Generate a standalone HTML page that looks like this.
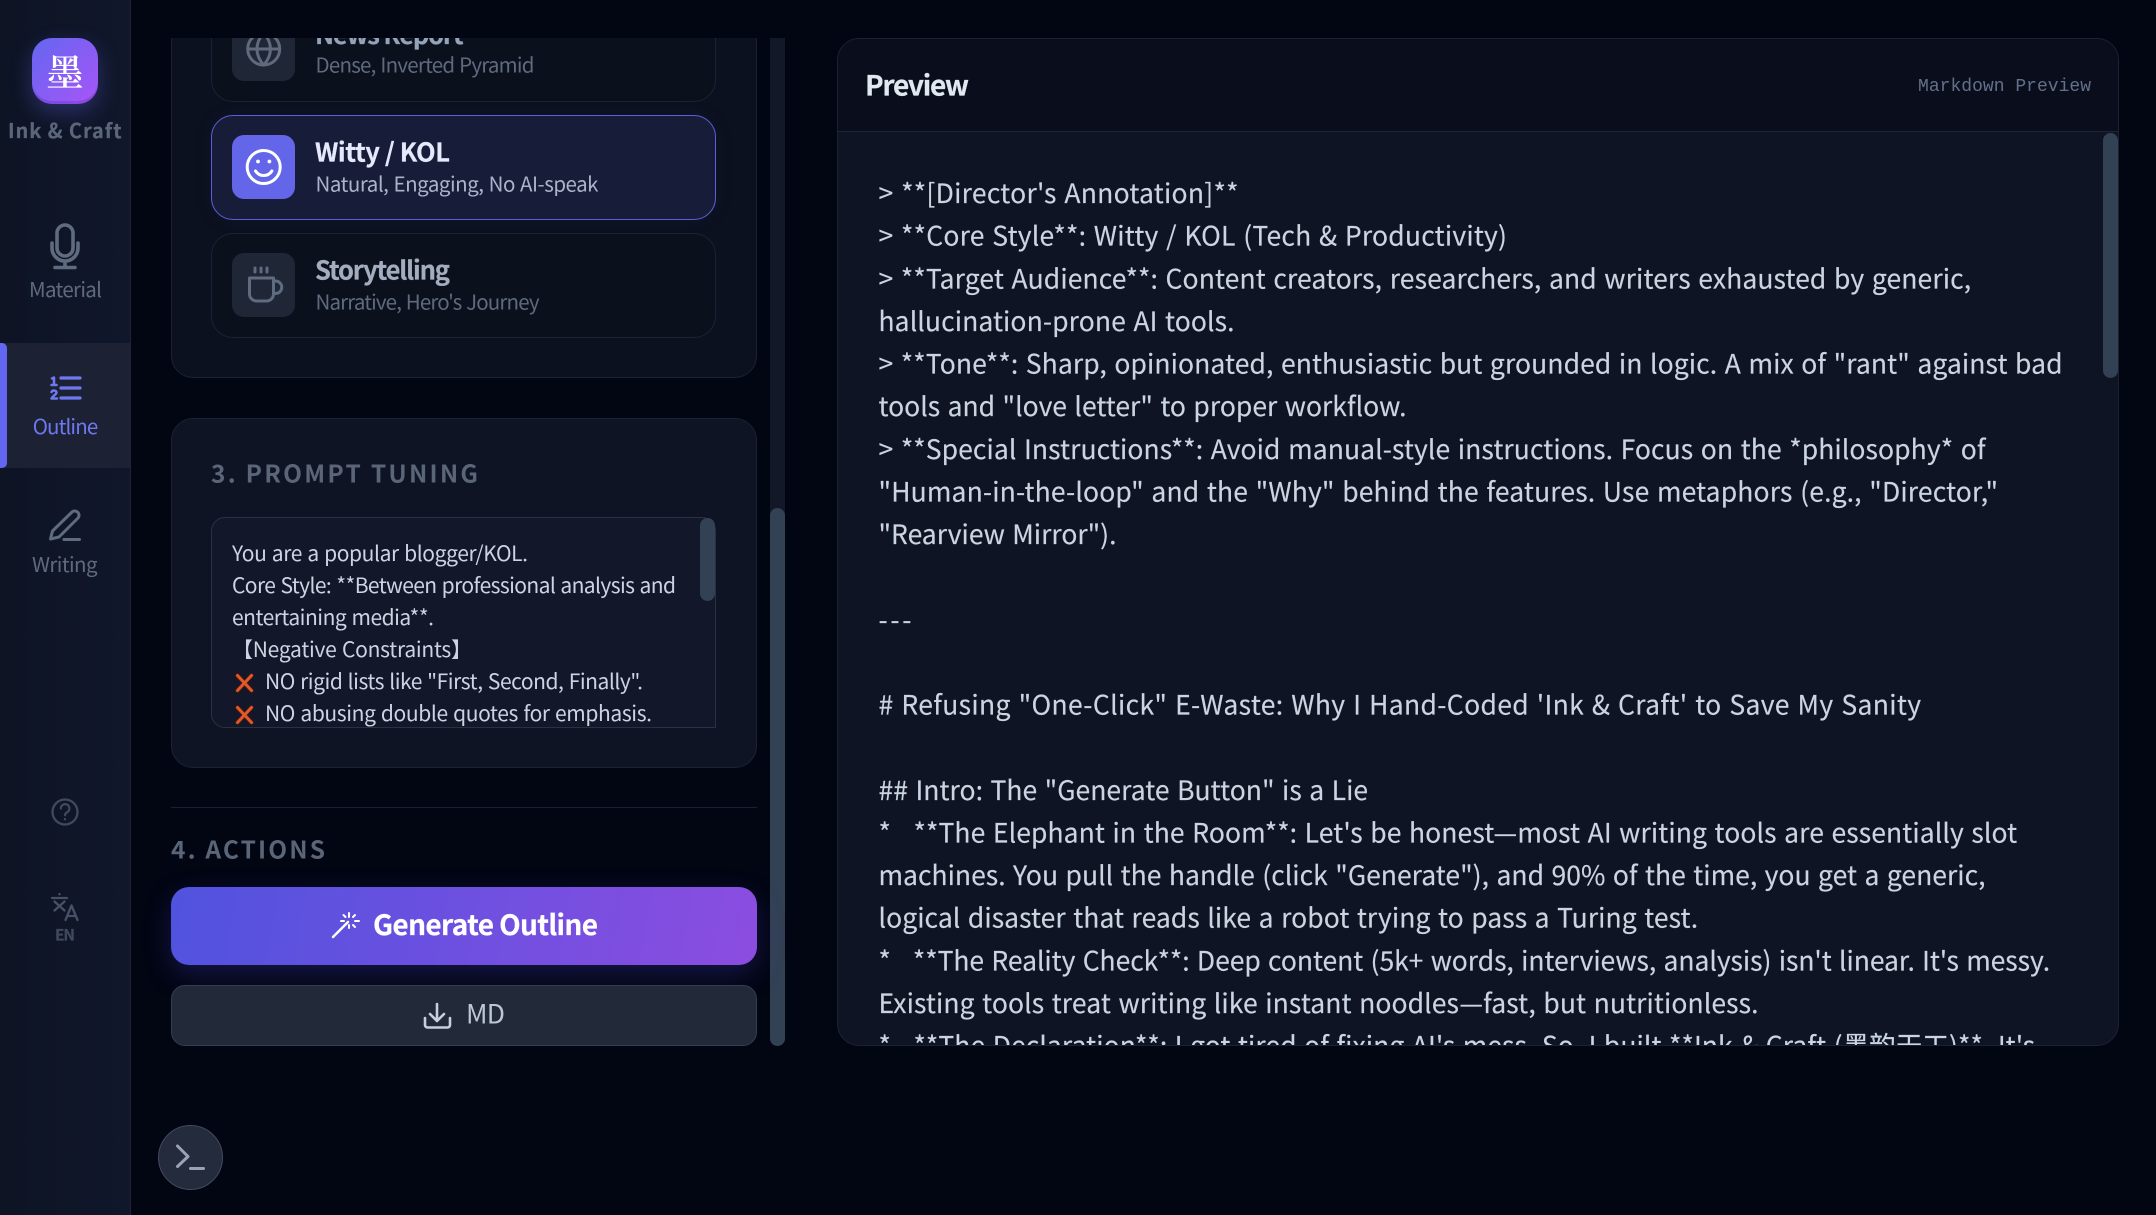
<!DOCTYPE html>
<html lang="en"><head><meta charset="utf-8"><title>Ink &amp; Craft</title>
<style>
html,body{margin:0;padding:0;width:2156px;height:1215px;overflow:hidden;background:#020512}
div{position:absolute;box-sizing:border-box}
#side{left:0;top:0;width:131px;height:1215px;background:linear-gradient(90deg,#0d1424,#11172b);border-right:1px solid #1e2436}
#active{left:0;top:343px;width:130px;height:125px;background:#1c2233}
#bar{left:0;top:343px;width:7px;height:125px;background:#6366f1;border-radius:0 5px 5px 0}
#logo{left:32px;top:38px;width:66px;height:66px;border-radius:20px;background:linear-gradient(135deg,#6366f1,#a855f7);box-shadow:0 8px 22px rgba(99,102,241,.32),inset 0 -3px 0 rgba(80,30,160,.25)}
#band{left:131px;top:0;width:2025px;height:38px;background:#020512}
.card{border:1px solid #1c2232;border-radius:22px}
#c1{left:171px;top:-60px;width:586px;height:438px;background:#0b111e}
#c2{left:171px;top:418px;width:586px;height:350px;background:#0f1424}
.opt{left:211px;width:505px;height:105px;border:1px solid #1c2232;border-radius:22px;background:#0b101d}
.ib{left:232px;width:63px;height:64px;border-radius:12px;background:#1f2635}
#o2{top:115px;background:#171c38;border-color:#5a60d8;box-shadow:0 0 22px rgba(99,102,241,.06)}
#ta{left:211px;top:517px;width:505px;height:211px;background:#12172a;border:1px solid #2a3142;border-radius:14px 14px 0 14px}
#tat{left:700px;top:518px;width:15px;height:83px;border-radius:8px;background:#334155}
#track{left:770px;top:38px;width:15px;height:1008px;background:#131829;border-radius:0 0 8px 8px}
#thumb{left:770px;top:508px;width:15px;height:538px;background:#334155;border-radius:8px}
#hr{left:171px;top:807px;width:586px;height:1px;background:#1a2030}
#gen{left:171px;top:887px;width:586px;height:78px;border-radius:18px;background:linear-gradient(100deg,#5053df,#8b4de0);box-shadow:0 10px 28px rgba(79,70,229,.25)}
#md{left:171px;top:985px;width:586px;height:61px;border-radius:14px;background:#222939;border:1px solid #343e50}
#term{left:158px;top:1125px;width:65px;height:65px;border-radius:50%;background:#232b3c;border:1px solid #414b5e}
#pv{left:837px;top:38px;width:1282px;height:1008px;border:1px solid #1c2232;border-radius:22px;overflow:hidden;background:#0f1424}
#pvh{left:0;top:0;width:1280px;height:93px;background:#090d1c;border-bottom:1px solid #1f2535}
#pvt{left:1265px;top:94px;width:15px;height:245px;background:#334155;border-radius:8px}
svg{position:absolute;left:0;top:0}
text{font-family:"Noto Sans CJK SC","Liberation Sans",sans-serif;white-space:pre}
.b{font-weight:700;stroke-width:.2px}
.l{font-size:26.5px;fill:#cbd5e1;stroke:#cbd5e1;stroke-width:.15px;word-spacing:1.5px}
.ta{font-size:21px;fill:#cbd5e1;word-spacing:1px}
.h{font-size:24.500px;font-weight:700;fill:#5a6578}
.s{font-size:20.500px;word-spacing:1px}
.n{font-size:20.500px;fill:#5f6a7e}
.ic{fill:none;stroke-linecap:round;stroke-linejoin:round}
</style></head><body>
<div id="c1" class="card"></div>
<div class="opt" style="top:-3px"></div>
<div class="ib" style="top:17px"></div>
<div class="opt" id="o2"></div>
<div class="ib" style="top:135px;background:#6366e8"></div>
<div class="opt" style="top:233px"></div>
<div class="ib" style="top:253px"></div>
<div id="c2" class="card"></div>
<div id="ta"></div><div id="tat"></div>
<div id="track"></div><div id="thumb"></div>
<div id="hr"></div><div id="gen"></div><div id="md"></div>
<div id="pv"><div id="pvh"></div><div id="pvt"></div></div>
<svg width="2156" height="1215" viewBox="0 0 2156 1215">
<defs>
<clipPath id="cp"><path d="M838 132H2118V1024a21 21 0 0 1-21 21H859a21 21 0 0 1-21-21Z"/></clipPath>
<clipPath id="ct"><rect x="212" y="518" width="503" height="209"/></clipPath>
</defs>
<!-- option content -->
<text class="b" x="315" y="44" font-size="25.500" fill="#94a3b8" stroke="#94a3b8" textLength="148.6">News Report</text>
<text class="s" x="315.5" y="72.500" fill="#5f6a7d" textLength="219">Dense, Inverted Pyramid</text>
<circle class="ic" cx="263.7" cy="49" r="16" stroke="#5f6a7d" stroke-width="3"/>
<path class="ic" stroke="#5f6a7d" stroke-width="3" d="M248 49h31M263.7 33c-9 10-9 22 0 32c9-10 9-22 0-32"/>
<text class="b" x="315" y="161.500" font-size="25.500" fill="#e5e9fb" stroke="#e5e9fb" textLength="135">Witty / KOL</text>
<text class="s" x="315.5" y="191.500" fill="#aab3c9" textLength="283">Natural, Engaging, No AI-speak</text>
<circle class="ic" cx="263.7" cy="167" r="16.5" stroke="#fff" stroke-width="3"/>
<circle cx="258" cy="161.5" r="1.9" fill="#fff"/><circle cx="269.4" cy="161.5" r="1.9" fill="#fff"/>
<path class="ic" stroke="#fff" stroke-width="3" d="M255.5 171c4 6 12.4 6 16.4 0"/>
<text class="b" x="315" y="279.500" font-size="25.500" fill="#a3adbe" stroke="#a3adbe" textLength="135">Storytelling</text>
<text class="s" x="315.5" y="309.500" fill="#5f6a7d" textLength="224">Narrative, Hero's Journey</text>
<path class="ic" stroke="#5f6b7e" stroke-width="3" d="M255 268v4M261 268v4M267 268v4M249.5 278h24v16a7 7 0 0 1-7 7h-10a7 7 0 0 1-7-7ZM273.5 281h2a5.500 5.500 0 0 1 0 12.500h-2"/>
<!-- tuning -->
<text class="h" x="211" y="482.500" textLength="267">3. PROMPT TUNING</text>
<g clip-path="url(#ct)">
<text class="ta" x="232" y="561" textLength="296">You are a popular blogger/KOL.</text>
<text class="ta" x="232" y="593" textLength="444">Core Style: **Between professional analysis and</text>
<text class="ta" x="232" y="625" textLength="202">entertaining media**.</text>
<text class="ta" x="232" y="657" textLength="240">【Negative Constraints】</text>
<path d="M237.5 675.500l14 15M251.500 675.500l-14 15" stroke="#3b1a12" stroke-width="5" stroke-linecap="round"/>
<path d="M237.5 675.500l14 15M251.500 675.500l-14 15" stroke="#e2572b" stroke-width="3" stroke-linecap="round"/>
<text class="ta" x="265" y="689" textLength="378">NO rigid lists like "First, Second, Finally".</text>
<path d="M237.5 707.500l14 15M251.500 707.500l-14 15" stroke="#3b1a12" stroke-width="5" stroke-linecap="round"/>
<path d="M237.5 707.500l14 15M251.500 707.500l-14 15" stroke="#e2572b" stroke-width="3" stroke-linecap="round"/>
<text class="ta" x="265" y="721" textLength="387">NO abusing double quotes for emphasis.</text>
</g>
<!-- actions -->
<text class="h" x="171" y="858.500" textLength="154">4. ACTIONS</text>
<path class="ic" stroke="#fff" stroke-width="2.500" d="M333 937l15-15"/>
<path class="ic" stroke="#fff" stroke-width="2" d="M349 913v4M349 925v3M341 921h3M355 921h4M343.500 915l2 2M353 925l2 2M355 915l-2 2"/>
<text class="b" x="373" y="935" font-size="28" fill="#fff" stroke="#fff" textLength="225">Generate Outline</text>
<path class="ic" stroke="#c6cfdb" stroke-width="2.600" d="M437 1004v17M430 1014l7 7l7-7M425 1018v7a2.500 2.500 0 0 0 2.500 2.500h20a2.500 2.500 0 0 0 2.500-2.500v-7"/>
<text x="466" y="1023.500" font-size="26.500" fill="#bcc7d6" textLength="39">MD</text>
<!-- preview -->
<text class="b" x="865" y="95.500" font-size="28" fill="#e2e8f0" stroke="#e2e8f0" textLength="104">Preview</text>
<text x="1918" y="91" font-size="18" fill="#64708a" style="font-family:'Liberation Mono',monospace" textLength="173">Markdown Preview</text>
<g clip-path="url(#cp)">
<text class="l" x="878.500" y="203" textLength="360">&gt; **[Director's Annotation]**</text>
<text class="l" x="878.500" y="245.600" textLength="628.500">&gt; **Core Style**: Witty / KOL (Tech &amp; Productivity)</text>
<text class="l" x="878.500" y="288.250" textLength="1092.600">&gt; **Target Audience**: Content creators, researchers, and writers exhausted by generic,</text>
<text class="l" x="878.500" y="330.900" textLength="356">hallucination-prone AI tools.</text>
<text class="l" x="878.500" y="373.500" textLength="1184">&gt; **Tone**: Sharp, opinionated, enthusiastic but grounded in logic. A mix of "rant" against bad</text>
<text class="l" x="878.500" y="416.100" textLength="528">tools and "love letter" to proper workflow.</text>
<text class="l" x="878.500" y="458.750" textLength="1107">&gt; **Special Instructions**: Avoid manual-style instructions. Focus on the *philosophy* of</text>
<text class="l" x="878.500" y="501.400" textLength="1119.500">"Human-in-the-loop" and the "Why" behind the features. Use metaphors (e.g., "Director,"</text>
<text class="l" x="878.500" y="544" textLength="238">"Rearview Mirror").</text>
<text class="l" x="878.500" y="629.250" textLength="33">---</text>
<text class="l" x="878.500" y="714.500" textLength="1042.500"># Refusing "One-Click" E-Waste: Why I Hand-Coded 'Ink &amp; Craft' to Save My Sanity</text>
<text class="l" x="878.500" y="799.750" textLength="489.600">## Intro: The "Generate Button" is a Lie</text>
<text class="l" x="878.500" y="842.400" textLength="1138.600">*   **The Elephant in the Room**: Let's be honest—most AI writing tools are essentially slot</text>
<text class="l" x="878.500" y="885" textLength="1107">machines. You pull the handle (click "Generate"), and 90% of the time, you get a generic,</text>
<text class="l" x="878.500" y="927.600" textLength="819.600">logical disaster that reads like a robot trying to pass a Turing test.</text>
<text class="l" x="878.500" y="970.250" textLength="1171.600">*   **The Reality Check**: Deep content (5k+ words, interviews, analysis) isn't linear. It's messy.</text>
<text class="l" x="878.500" y="1012.900" textLength="880">Existing tools treat writing like instant noodles—fast, but nutritionless.</text>
<text class="l" x="878.500" y="1055.500" textLength="1156.500">*   **The Declaration**: I got tired of fixing AI's mess. So, I built **Ink &amp; Craft (墨韵天工)**. It's</text>
</g>
</svg>
<div id="band"></div>
<div id="side"></div><div id="active"></div><div id="bar"></div><div id="logo"></div>
<div id="term"></div>
<svg width="2156" height="1215" viewBox="0 0 2156 1215" style="pointer-events:none">
<text x="65" y="86" font-size="37" text-anchor="middle" fill="#fff" font-weight="600" style="font-family:'Noto Serif CJK SC',serif">墨</text>
<text class="b" x="8" y="138" font-size="20" fill="#5b667b" stroke="#5b667b" textLength="113.500">Ink &amp; Craft</text>
<!-- mic -->
<path class="ic" stroke="#5f6b7e" stroke-width="3.600" d="M65 225a8 8 0 0 1 8 8v15a8 8 0 0 1-16 0v-15a8 8 0 0 1 8-8ZM52 243v5a13 13 0 0 0 26 0v-5M65 261v6.500M55 267.500h20"/>
<text class="n" x="29" y="297" textLength="73">Material</text>
<!-- outline -->
<path class="ic" stroke="#6f78f0" stroke-width="3.200" d="M61 378h19M61 388h19M61 398h19"/>
<path class="ic" stroke="#6f78f0" stroke-width="2.500" d="M52 378.500l2-1v7M51.500 385h5M51.500 392c1-2 5-2 5 .5c0 2-3.500 3-5 6h5.500"/>
<text class="n" x="32.700" y="434" textLength="65.500" style="fill:#6f78f0">Outline</text>
<!-- pen -->
<path class="ic" stroke="#5f6b7e" stroke-width="3" d="M50.500 539l2-8L71.500 512.500a3.700 3.700 0 0 1 6.500 5.500L59 537ZM64 539.500h15.500"/>
<text class="n" x="32" y="572" textLength="65.500">Writing</text>
<!-- help -->
<circle class="ic" cx="65" cy="812" r="12.500" stroke="#3f4a5e" stroke-width="2.300"/>
<path class="ic" stroke="#3f4a5e" stroke-width="2.300" d="M60.800 808.500a4.300 4.300 0 1 1 6.400 3.700c-1.500.9-2.200 1.600-2.200 3M65 819v.2"/>
<!-- translate -->
<path class="ic" stroke="#465166" stroke-width="2.300" d="M52 898h15M59.500 894v.2M54.500 901.500l10 9M64.500 901.500l-10 9"/>
<path class="ic" stroke="#465166" stroke-width="2.300" d="M65.500 920l6-14.500l6 14.500M67.500 916h8"/>
<text class="b" x="55" y="940.500" font-size="15.500" fill="#3f4a5c" stroke="#3f4a5c" textLength="20">EN</text>
<!-- terminal -->
<path class="ic" stroke="#98a3b5" stroke-width="3" d="M177.500 1146l10.500 10.500l-10.500 10M190.500 1168.500h13"/>
</svg>
</body></html>
